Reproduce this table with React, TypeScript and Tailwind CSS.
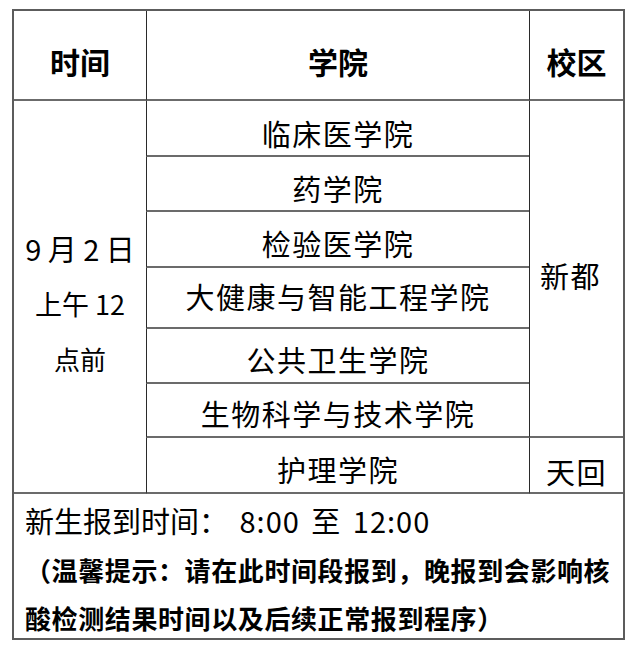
const colleges: { name: string; pt: string }[] = [
  { name: '临床医学院', pt: 'pt-[18px]' },
  { name: '药学院', pt: 'pt-[17px]' },
  { name: '检验医学院', pt: 'pt-[17px]' },
  { name: '大健康与智能工程学院', pt: 'pt-[14px]' },
  { name: '公共卫生学院', pt: 'pt-[16px]' },
  { name: '生物科学与技术学院', pt: 'pt-[15px]' },
  { name: '护理学院', pt: 'pt-[17px]' },
]

const rowStart = ['row-start-2', 'row-start-3', 'row-start-4', 'row-start-5', 'row-start-6', 'row-start-7', 'row-start-8']

export default function App() {
  return (
    <div className="min-h-[652px] w-[640px] bg-white pl-[12px] pt-[9px] font-['Noto_Sans_CJK_SC',sans-serif] text-black">
      <div className="w-[613px] border-2 border-[#5c5c5c]">
        <div className="grid grid-cols-[132px_383px_94px] grid-rows-[90px_56px_55px_56px_61px_55px_54px_56px_144px]">
          {/* header */}
          <div className="col-start-1 row-start-1 flex items-center justify-center border-b-2 border-b-[#6b6b6b] pt-[12px] text-[30px] font-bold leading-[30px]">
            时间
          </div>
          <div className="col-start-2 row-start-1 flex items-center justify-center border-b-2 border-l border-b-[#6b6b6b] border-l-[#2a2a2a] pt-[12px] text-[30px] font-bold leading-[30px]">
            学院
          </div>
          <div className="col-start-3 row-start-1 flex items-center justify-center border-b-2 border-l border-b-[#6b6b6b] border-l-[#2a2a2a] pt-[12px] text-[30px] font-bold leading-[30px]">
            校区
          </div>

          {/* time */}
          <div className="col-start-1 row-span-7 row-start-2 flex flex-col items-center justify-center border-b-2 border-b-[#6b6b6b] pt-[13px]">
            <span className="text-[29px] leading-[55px]">9 月 2 日</span>
            <span className="text-[27px] leading-[55px]">上午 12</span>
            <span className="text-[26px] leading-[55px]">点前</span>
          </div>

          {/* colleges */}
          {colleges.map((c, i) => (
            <div
              key={c.name}
              className={`col-start-2 ${rowStart[i]} flex items-start justify-center border-b-2 border-l border-b-[#6b6b6b] border-l-[#2a2a2a] ${c.pt} text-[29px] leading-[29px] tracking-[1.5px]`}
            >
              {c.name}
            </div>
          ))}

          {/* campus */}
          <div className="col-start-3 row-span-6 row-start-2 flex items-center justify-center border-b-2 border-l border-b-[#6b6b6b] border-l-[#2a2a2a] pr-[12px] pt-[13px] text-[29px] leading-[29px] tracking-[1.5px]">
            新都
          </div>
          <div className="col-start-3 row-start-8 flex items-center justify-center border-b-2 border-l border-b-[#6b6b6b] border-l-[#2a2a2a] pt-[13px] text-[29px] leading-[29px] tracking-[1.5px]">
            天回
          </div>

          {/* footer */}
          <div className="col-span-3 col-start-1 row-start-9 pl-[11px]">
            <p className="text-[29px] leading-[52px]">
              新生报到时间：<span className="tracking-[1px] [word-spacing:4px]"> 8:00 至 12:00</span>
            </p>
            <p className="text-[26px] font-bold leading-[48px] tracking-[0.6px]">
              （温馨提示：请在此时间段报到，晚报到会影响核
              <br />
              酸检测结果时间以及后续正常报到程序）
            </p>
          </div>
        </div>
      </div>
    </div>
  )
}
